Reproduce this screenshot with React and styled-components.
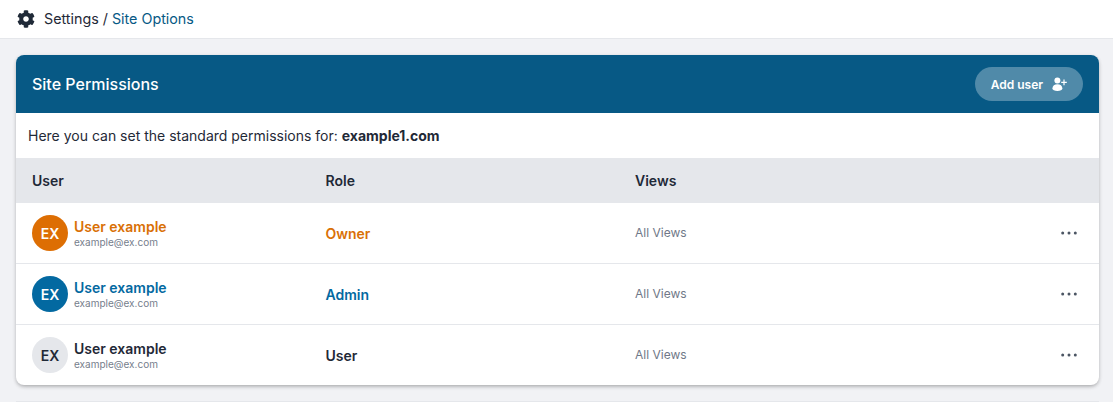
import styled, { createGlobalStyle } from "styled-components";
import { FaCog } from "react-icons/fa";

const GlobalStyle = createGlobalStyle`
  html, body {
    margin: 0;
    padding: 0;
    background: #f1f2f5;
    font-family: Inter, "Liberation Sans", sans-serif;
    color: #1f2937;
  }
`;

const tones = {
  owner: { main: "#d97006", avatar: "#dd6e03", text: "#ffffff" },
  admin: { main: "#0369a1", avatar: "#0369a1", text: "#ffffff" },
  user: { main: "#1f2937", avatar: "#e5e7eb", text: "#1f2937" },
};

const Page = styled.div`
  height: 402px;
  overflow: hidden;
`;

const TopBar = styled.header`
  display: flex;
  align-items: center;
  gap: 9px;
  height: 38px;
  padding-left: 17px;
  background: #fff;
  border-bottom: 1px solid #e5e7eb;
  font-size: 14.3px;
  line-height: 20px;
`;

const Crumb = styled.span`
  color: #075985;
`;

const Main = styled.main`
  display: flex;
  flex-direction: column;
  gap: 16px;
  padding: 16px 14px 16px 16px;
`;

const Card = styled.section`
  background: #fff;
  border-radius: 8px;
  overflow: hidden;
  box-shadow: 0 2px 4px -1px rgba(0, 0, 0, 0.3), 0 1px 4px rgba(0, 0, 0, 0.08);
`;

const NextCard = styled.div`
  height: 40px;
  background: #fff;
  border-top: 1px solid #e5e7eb;
`;

const CardHeader = styled.div`
  display: flex;
  align-items: center;
  justify-content: space-between;
  height: 58px;
  padding: 0 16px;
  background: #075985;
  color: #fff;
`;

const Title = styled.h2`
  margin: 0;
  font-size: 16px;
  font-weight: 500;
`;

const AddButton = styled.button`
  display: flex;
  align-items: center;
  gap: 9px;
  height: 34px;
  padding: 0 16px;
  border: 0;
  border-radius: 17px;
  background: #508aa9;
  color: #fff;
  font: 600 12px Inter, sans-serif;
`;

const Intro = styled.p`
  margin: 0;
  height: 45px;
  padding: 0 12px;
  font-size: 14px;
  line-height: 45px;

  strong {
    font-weight: 700;
  }
`;

const Grid = styled.div`
  display: grid;
  grid-template-columns: 293.5px 309.5px 1fr auto;
  align-items: center;
  padding: 0 16px;
`;

const HeadRow = styled(Grid)`
  height: 45px;
  background: #e5e7eb;
  font-size: 14px;
  font-weight: 600;
`;

const Row = styled(Grid)`
  height: 60px;
  border-top: ${(p) => (p.$first ? "0" : "1px solid #e5e7eb")};
`;

const UserCell = styled.div`
  display: flex;
  align-items: center;
  gap: 6px;
`;

const Avatar = styled.div`
  display: flex;
  align-items: center;
  justify-content: center;
  width: 36px;
  height: 36px;
  border-radius: 50%;
  background: ${(p) => tones[p.$tone].avatar};
  color: ${(p) => tones[p.$tone].text};
  font-size: 14px;
  font-weight: 600;
`;

const Name = styled.div`
  color: ${(p) => tones[p.$tone].main};
  font-size: 14px;
  font-weight: 600;
  line-height: 18px;
`;

const Email = styled.div`
  color: #767e8c;
  font-size: 10px;
  line-height: 13px;
`;

const Role = styled.div`
  color: ${(p) => tones[p.$tone].main};
  font-size: 14px;
  font-weight: 600;
`;

const Views = styled.div`
  padding-bottom: 2px;
  color: #707888;
  font-size: 12px;
`;

const More = styled.button`
  display: flex;
  padding: 0;
  margin-right: 6px;
  border: 0;
  background: none;
  color: #4b5563;
`;

const members = [
  { tone: "owner", role: "Owner" },
  { tone: "admin", role: "Admin" },
  { tone: "user", role: "User" },
];

function UserPlusIcon() {
  return (
    <svg width="15" height="14" viewBox="0 0 15 14" fill="currentColor">
      <circle cx="5.4" cy="3.4" r="3" />
      <path d="M0.4 11.4C0.4 8.7 2.6 7.2 5.4 7.2s5 1.5 5 4.2c0 1.6-2.2 2.5-5 2.5S0.4 13 0.4 11.4z" />
      <path d="M11.4 2.6h1.2v2.2h2.2V6h-2.2v2.2h-1.2V6H9.2V4.8h2.2z" />
    </svg>
  );
}

function DotsIcon() {
  return (
    <svg width="16" height="4" viewBox="0 0 16 4" fill="currentColor">
      <circle cx="1.7" cy="2" r="1.5" />
      <circle cx="8" cy="2" r="1.5" />
      <circle cx="14.3" cy="2" r="1.5" />
    </svg>
  );
}

export default function App() {
  return (
    <Page>
      <GlobalStyle />
      <TopBar>
        <FaCog size={18} color="#1f2937" />
        <span>
          Settings / <Crumb>Site Options</Crumb>
        </span>
      </TopBar>
      <Main>
        <Card>
          <CardHeader>
            <Title>Site Permissions</Title>
            <AddButton>
              Add user
              <UserPlusIcon />
            </AddButton>
          </CardHeader>
          <Intro>
            Here you can set the standard permissions for: <strong>example1.com</strong>
          </Intro>
          <HeadRow>
            <div>User</div>
            <div>Role</div>
            <div>Views</div>
          </HeadRow>
          {members.map((m, i) => (
            <Row key={m.role} $first={i === 0}>
              <UserCell>
                <Avatar $tone={m.tone}>EX</Avatar>
                <div>
                  <Name $tone={m.tone}>User example</Name>
                  <Email>example@ex.com</Email>
                </div>
              </UserCell>
              <Role $tone={m.tone}>{m.role}</Role>
              <Views>All Views</Views>
              <More>
                <DotsIcon />
              </More>
            </Row>
          ))}
        </Card>
        <NextCard />
      </Main>
    </Page>
  );
}
